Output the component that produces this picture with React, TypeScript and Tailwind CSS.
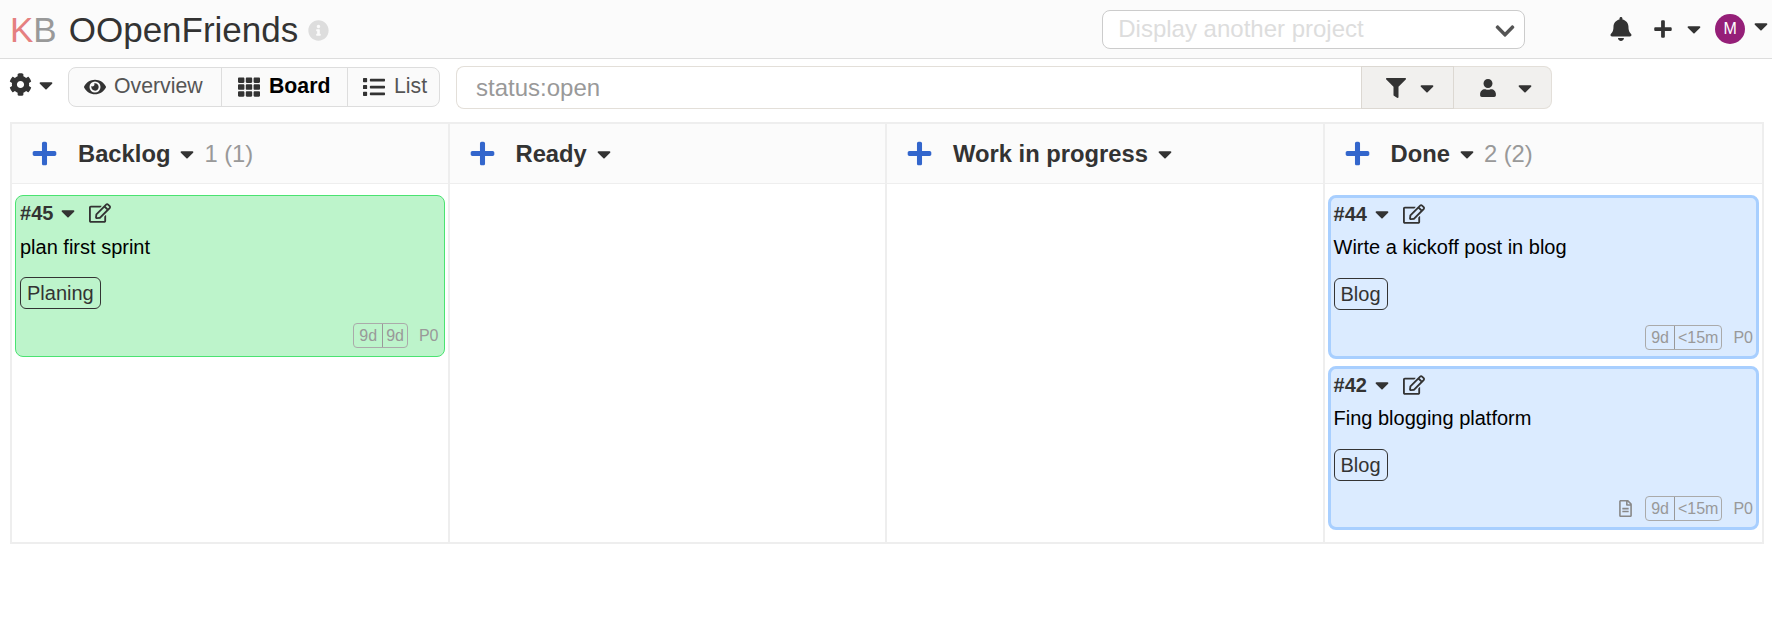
import {
    FaBell,
    FaCaretDown,
    FaChevronDown,
    FaCog,
    FaEye,
    FaFilter,
    FaInfoCircle,
    FaList,
    FaPlus,
    FaRegEdit,
    FaRegFileAlt,
    FaTh,
    FaUser,
} from "react-icons/fa";

type Task = {
    id: number;
    title: string;
    tag: string;
    times: string[];
    note?: boolean;
};

const columns: { name: string; count?: string; tasks: Task[]; done?: boolean }[] = [
    {
        name: "Backlog",
        count: "1 (1)",
        tasks: [{ id: 45, title: "plan first sprint", tag: "Planing", times: ["9d", "9d"] }],
    },
    { name: "Ready", tasks: [] },
    { name: "Work in progress", tasks: [] },
    {
        name: "Done",
        count: "2 (2)",
        done: true,
        tasks: [
            { id: 44, title: "Wirte a kickoff post in blog", tag: "Blog", times: ["9d", "<15m"] },
            { id: 42, title: "Fing blogging platform", tag: "Blog", times: ["9d", "<15m"], note: true },
        ],
    },
];

function TaskCard({ task, done }: { task: Task; done?: boolean }) {
    return (
        <div
            className={
                done
                    ? "rounded-[8px] border-[3px] border-[#a8cfff] bg-[#dbebff] px-[3px] pb-[6px]"
                    : "rounded-[8px] border border-[#4ae371] bg-[#bdf4cb] pl-[4px] pr-[5px] pb-[8px]"
            }
        >
            <div className={`flex items-center text-[#333] ${done ? "h-[31px]" : "h-[34px]"}`}>
                <span className="text-[20px] font-bold">#{task.id}</span>
                <FaCaretDown size={22} className="ml-[4px]" />
                <FaRegEdit size={22} className="ml-[10px]" />
            </div>
            <div className={`flex h-[34px] items-center text-[20px] text-black ${done ? "mt-[1px]" : ""}`}>
                {task.title}
            </div>
            <div className={`${done ? "mt-[14px]" : "mt-[13px]"} flex`}>
                <span className="flex h-[32px] items-center rounded-[6px] border border-[#333] px-[6px] text-[20px] text-[#333]">
                    {task.tag}
                </span>
            </div>
            <div className={`${done ? "mt-[15px]" : "mt-[14px]"} flex h-[25px] items-center justify-end text-[16px] text-[#999]`}>
                {task.note && <FaRegFileAlt size={17} className="mr-[11px] text-[#888]" />}
                <span className="flex h-[25px] items-center rounded-[4px] border border-[#aaa]">
                    <span className="border-r border-[#999] px-[5px] leading-[23px]">{task.times[0]}</span>
                    <span className="px-[3px] leading-[23px]">{task.times[1]}</span>
                </span>
                <span className="ml-[11px]">P0</span>
            </div>
        </div>
    );
}

export default function App() {
    return (
        <div className="h-[638px] w-[1772px] overflow-hidden bg-white font-['Liberation_Sans',Arial,sans-serif]">
            <header className="flex h-[59px] items-center border-b border-[#ddd] bg-[#fbfbfb] pl-[10px]">
                <span className="text-[35px] leading-none">
                    <span className="text-[#e58080]">K</span>
                    <span className="text-[#999]">B</span>
                </span>
                <span className="ml-[12px] text-[35px] leading-none text-[#333]">OOpenFriends</span>
                <FaInfoCircle size={21} className="ml-[10px] mt-[3px] text-[#ddd]" />
                <div className="ml-[773px] flex h-[39px] w-[424px] items-center justify-between rounded-[8px] border border-[#ccc] bg-white pl-[15px] pr-[8px] text-[24px] text-[#ddd]">
                    <span>Display another project</span>
                    <FaChevronDown size={22} className="mt-[4px] text-[#555]" />
                </div>
                <FaBell size={24} className="ml-[84px] text-[#333]" />
                <FaPlus size={20} className="ml-[20px] text-[#333]" />
                <FaCaretDown size={22} className="ml-[10px] text-[#333]" />
                <span className="ml-[10px] flex h-[30px] w-[30px] items-center justify-center rounded-full bg-[#951f78] text-[16px] text-white">
                    M
                </span>
                <FaCaretDown size={22} className="mb-[6px] ml-[5px] text-[#333]" />
            </header>

            <div className="flex h-[63px] items-start pl-[9px]">
                <div className="mt-[14px] flex items-center text-[#333]">
                    <FaCog size={23} />
                    <FaCaretDown size={22} className="ml-[3px]" />
                </div>
                <div className="ml-[11px] mt-[8px] flex h-[40px] rounded-[8px] border border-[#ddd] bg-[#fafafa] text-[21.25px] text-[#555]">
                    <div className="flex w-[153px] items-center gap-[8px] border-r border-[#ddd] pl-[15px]">
                        <FaEye size={22} className="text-[#333]" />
                        Overview
                    </div>
                    <div className="flex w-[126px] items-center gap-[9px] border-r border-[#ddd] pl-[16px] font-bold text-black">
                        <FaTh size={22} className="text-[#333]" />
                        Board
                    </div>
                    <div className="flex w-[91px] items-center gap-[9px] pl-[15px]">
                        <FaList size={22} className="text-[#333]" />
                        List
                    </div>
                </div>
                <div className="ml-[16px] mt-[7px] flex h-[43px]">
                    <input
                        readOnly
                        defaultValue="status:open"
                        className="h-full w-[905px] rounded-l-[8px] border border-r-0 border-[#e3dfd9] bg-white pl-[19px] text-[24px] text-[#999] outline-none"
                    />
                    <div className="flex w-[93px] items-center border border-[#dcd8d2] bg-[#f1f0ee] pl-[24px] text-[#333]">
                        <FaFilter size={20} />
                        <FaCaretDown size={22} className="ml-[10px]" />
                    </div>
                    <div className="flex w-[98px] items-center rounded-r-[8px] border border-l-0 border-[#e3dfd9] bg-[#f1f0ee] pl-[25px] text-[#333]">
                        <FaUser size={18} />
                        <FaCaretDown size={22} className="ml-[17px]" />
                    </div>
                </div>
            </div>

            <div className="ml-[10px] flex h-[422px] w-[1754px] border-2 border-[#eee]">
                {columns.map((column, i) => (
                    <div key={column.name} className={`flex w-[438px] flex-col ${i < 3 ? "border-r-2 border-[#eee]" : ""}`}>
                        <div className="flex h-[60px] flex-none items-center border-b border-[#eee] bg-[#fbfbfb] pl-[19px]">
                            <FaPlus size={27} className="text-[#3366cc]" />
                            <span className="ml-[20px] text-[23.75px] font-bold text-[#333]">{column.name}</span>
                            <FaCaretDown size={22} className="ml-[6px] text-[#333]" />
                            {column.count && <span className="ml-[6px] text-[23.75px] text-[#999]">{column.count}</span>}
                        </div>
                        <div className="flex flex-col gap-[7px] px-[3px] pt-[11px]">
                            {column.tasks.map((task) => (
                                <TaskCard key={task.id} task={task} done={column.done} />
                            ))}
                        </div>
                    </div>
                ))}
            </div>
        </div>
    );
}
